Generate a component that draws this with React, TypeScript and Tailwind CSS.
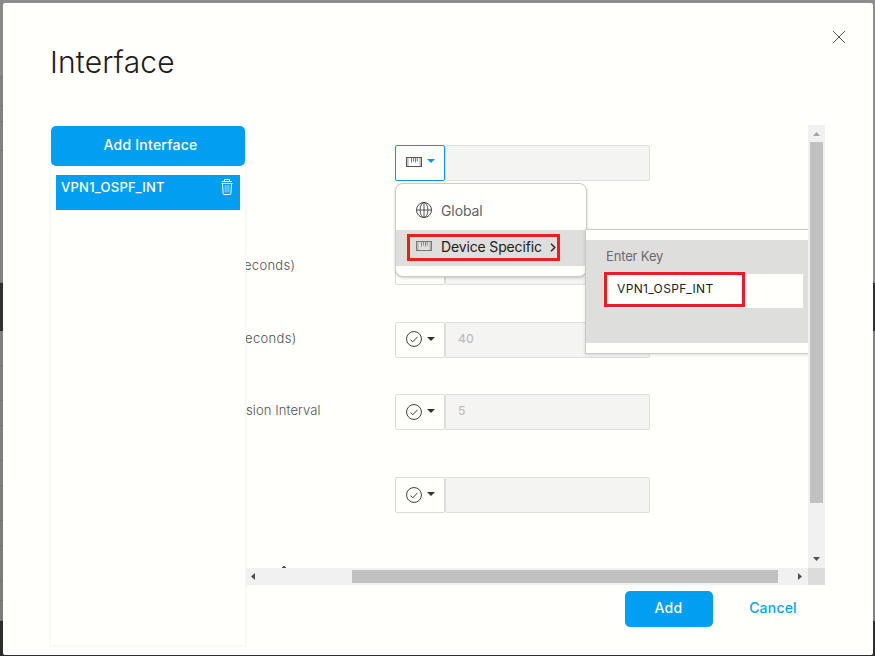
import React from "react";

const bands = [
  { h: "h-[77px]", c: "bg-[#898989]" },
  { h: "h-[29px]", c: "bg-[#838383]" },
  { h: "h-4", c: "bg-[#828282]" },
  { h: "h-[29px]", c: "bg-[#828282]" },
  { h: "h-[132px]", c: "bg-[#828282]" },
  { h: "h-12", c: "bg-[#303032]" },
  { h: "h-[35px]", c: "bg-[#80807e]" },
  { h: "h-[35px]", c: "bg-[#80807e]" },
  { h: "h-[25px]", c: "bg-[#80807e]" },
  { h: "h-[35px]", c: "bg-[#80807e]" },
  { h: "h-[25px]", c: "bg-[#80807e]" },
  { h: "h-[35px]", c: "bg-[#7c7c78]" },
  { h: "h-[25px]", c: "bg-[#7c7c78]" },
  { h: "h-[35px]", c: "bg-[#7c7c78]" },
  { h: "h-5", c: "bg-[#7c7c78]" },
  { h: "h-5", c: "bg-[#7c7c7c]" },
  { h: "h-[35px]", c: "bg-[#2d2d30]" },
];

function Backdrop() {
  return (
    <div className="absolute inset-0 flex bg-[#828280]">
      <div className="flex w-[3px] flex-col">
        {bands.map((b, i) => (
          <div key={i} className={`${b.h} ${b.c} shrink-0 border-b border-black/10`} />
        ))}
      </div>
      <div className="flex flex-1 flex-col">
        <div className="h-[283px] bg-[#8d8d8b]" />
        <div className="h-12 bg-[#303032]" />
        <div className="h-[290px] bg-[#80807e]" />
        <div className="h-[35px] bg-[#2d2d30]" />
      </div>
    </div>
  );
}

function DeviceIcon({ className = "" }: { className?: string }) {
  return (
    <svg width="16" height="10" viewBox="0 0 16 10" fill="none" stroke="currentColor" className={className}>
      <rect x="0.5" y="0.5" width="15" height="9" strokeWidth="1" />
      <path d="M1.9 1v8M14.1 1v8" strokeWidth="0.6" />
      <path d="M5.5 1v4.5M7.5 1v3.5M9.5 1v4.5M11.2 1v3.5" strokeWidth="0.8" />
    </svg>
  );
}

function GlobeIcon() {
  return (
    <svg width="16" height="16" viewBox="0 0 16 16" fill="none" stroke="#444" strokeWidth="1">
      <circle cx="8" cy="8" r="7.5" />
      <ellipse cx="8" cy="8" rx="3.9" ry="7.5" strokeWidth="0.9" />
      <path d="M8 .5v15M.5 8h15" strokeWidth="0.9" />
    </svg>
  );
}

function CheckIcon() {
  return (
    <svg width="16" height="16" viewBox="0 0 16 16" fill="none" stroke="#3f3f3f">
      <circle cx="8" cy="8" r="7.45" strokeWidth="1" />
      <path d="M4.5 8.6 6.8 10.8 11.5 5.8" strokeWidth="1" />
    </svg>
  );
}

function Caret({ className }: { className: string }) {
  return (
    <svg width="8" height="4" viewBox="0 0 8 4" fill="currentColor" className={className}>
      <path d="M0 0h8L4 4z" />
    </svg>
  );
}

function TrashIcon() {
  return (
    <svg width="12" height="17" viewBox="0 0 12 17" fill="none" stroke="#fff" strokeWidth="1">
      <path d="M1 3.5h10M3.5 3.2V1.5h5v1.7M.5 5.5h11M1.5 5.5l.6 10q.1 1 1 1h5.8q.9 0 1-1l.6-10" />
      <path d="M4.2 7v7.5M6 7v7.5M7.8 7v7.5" strokeWidth="0.6" />
    </svg>
  );
}

type FieldProps = { label?: string; labelClass?: string; value?: string; gap: string; iconClass?: string; active?: boolean };

function Field({ label, labelClass = "", value, gap, iconClass = "mt-[9px]", active }: FieldProps) {
  return (
    <div className={`${gap} flex h-9 w-[404px] shrink-0`}>
      <div className={`w-[149px] whitespace-nowrap text-[13px] leading-8 font-light text-[#505050] ${labelClass}`}>{label}</div>
      <div
        className={`flex w-[50px] items-start rounded-[2px] border pl-[10px] ${
          active ? "border-[#0d94f5] text-[#0096f0]" : "border-[#dadad8] text-[#333]"
        }`}
      >
        {active ? <DeviceIcon className="mt-[11px] text-[#555]" /> : <div className={iconClass}><CheckIcon /></div>}
        <Caret className={active ? "mt-[13px] ml-[5px]" : "mt-[14px] ml-[5px]"} />
      </div>
      <div className="flex-1 rounded-[2px] border border-[#dededb] bg-[#f4f5f2] pl-3 text-[12px] leading-[31px] font-medium text-[#bdbdbd]">
        {value}
      </div>
    </div>
  );
}

function DropdownMenu() {
  return (
    <div className="absolute top-[58px] left-[149px] h-[94px] w-[192px] rounded-lg border border-[#cbcbc9] bg-[#fffffc] pt-[9px] shadow-[0_1px_3px_rgba(0,0,0,0.2)]">
      <div className="flex h-[37px] items-start pt-[9px] pl-5 text-[14px] leading-[18px] text-[#626262]">
        <GlobeIcon />
        <span className="ml-[9px] tracking-[-0.1px]">Global</span>
      </div>
      <div className="flex h-9 items-center bg-[#dededd] pl-[11px]">
        <div className="-mt-[1px] flex h-[27px] w-[153px] items-center border-[3px] border-[#ed1c24] pl-[6px] text-[14px] whitespace-nowrap text-[#202020]">
          <DeviceIcon className="-mt-[3px] shrink-0 text-[#777]" />
          <span className="-mt-[2px] ml-[9px] w-[101px] shrink-0 tracking-[-0.15px]">Device Specific</span>
          <svg width="6" height="9" viewBox="0 0 6 9" fill="none" stroke="#222" strokeWidth="1.4" className="ml-[8px] shrink-0">
            <path d="M1 .7 4.8 4.5 1 8.3" />
          </svg>
        </div>
      </div>
    </div>
  );
}

function KeyPanel() {
  return (
    <div className="absolute top-[104px] left-[339px] h-[125px] w-[240px] border border-[#c9c9c7] bg-[#fffffc] pt-[10px] shadow-[0_1px_4px_rgba(0,0,0,0.12)]">
      <div className="h-[103px] bg-[#dededd] pl-5">
        <div className="h-[34px] text-[13px] leading-[32px] tracking-[-0.15px] text-[#6a6a6a]">Enter Key</div>
        <div className="relative ml-px h-[34px] w-[196px] bg-[#fffffc] pl-[10px] text-[12px] leading-[29px] tracking-[0.35px] text-[#222]">
          VPN1_OSPF_INT
          <div className="absolute -top-[2px] -left-[3px] h-[35px] w-[141px] border-[3px] border-[#ed1c24]" />
        </div>
      </div>
    </div>
  );
}

function ScrollRegion() {
  return (
    <div className="grid h-[460px] w-[579px] grid-cols-[562px_17px] grid-rows-[443px_17px]">
      <div className="relative flex flex-col overflow-hidden">
        <Field gap="mt-5" active />
        <Field gap="mt-[68px]" label="econds)" labelClass="-ml-[2px] w-[151px] tracking-[0.3px]" />
        <Field gap="mt-[37px]" label="econds)" labelClass="-ml-[1px] w-[150px] tracking-[0.35px]" value="40" iconClass="mt-[8px]" />
        <Field gap="mt-9" label="sion Interval" labelClass="tracking-[0.1px]" value="5" />
        <Field gap="mt-[47px]" />
        <svg width="4" height="2" viewBox="0 0 4 2" fill="#555" className="mt-[53px] ml-[36px] shrink-0">
          <path d="M1 0h2v1h1v1H0V1h1z" />
        </svg>
        <DropdownMenu />
        <KeyPanel />
      </div>
      <div className="flex flex-col items-center bg-[#f1f1f1]">
        <svg width="7" height="4" viewBox="0 0 7 4" fill="#a3a3a3" className="mt-[7px]"><path d="M3.5 0 7 4H0z" /></svg>
        <div className="mt-[6px] h-[361px] w-[13px] bg-[#c1c1c1]" />
        <svg width="7" height="4" viewBox="0 0 7 4" fill="#505050" className="mt-[54px]"><path d="M0 0h7L3.5 4z" /></svg>
      </div>
      <div className="flex items-center bg-[#f1f1f1]">
        <svg width="4" height="7" viewBox="0 0 4 7" fill="#505050" className="ml-[5px]"><path d="M4 0v7L0 3.5z" /></svg>
        <div className="ml-[97px] h-[13px] w-[426px] bg-[#c1c1c1]" />
        <svg width="4" height="7" viewBox="0 0 4 7" fill="#505050" className="ml-5"><path d="M0 0v7l4-3.5z" /></svg>
      </div>
      <div className="bg-[#dcdcdc]" />
    </div>
  );
}

export default function App() {
  return (
    <div className="relative h-[656px] w-[875px] overflow-hidden pt-[3px] pl-[3px] font-['Inter','Liberation_Sans',sans-serif]">
      <Backdrop />
      <div className="relative flex h-[652px] w-[870px] flex-col rounded-[2px] bg-[#fffffc]">
        <header className="flex h-[122px] shrink-0 items-start justify-between pr-[28px] pl-12">
          <h1 className="-ml-px mt-[39px] text-[30px] leading-10 font-light tracking-[0.15px] text-[#1c1c1c]">Interface</h1>
          <svg width="12" height="12" viewBox="0 0 12 12" stroke="#555" strokeWidth="1" className="mt-7">
            <path d="M0 0 12 12M12 0 0 12" />
          </svg>
        </header>
        <div className="flex pl-12">
          <aside className="mt-px h-[519px] w-[194px] shrink-0 shadow-[0_0_4px_rgba(0,0,0,0.09)]">
            <button className="flex h-10 w-full items-start justify-center rounded-[5px] bg-[#029ff0] pt-[9px] pl-[5px] text-[14px] leading-5 font-medium tracking-[0.25px] text-white">
              Add Interface
            </button>
            <div className="mx-[5px] mt-[9px] flex h-[35px] items-start justify-between bg-[#029ff0] pr-[7px] pl-[5px] text-white">
              <span className="pt-[2px] text-[13px] leading-5 font-medium tracking-[0.25px]">VPN1_OSPF_INT</span>
              <div className="mt-[3px]"><TrashIcon /></div>
            </div>
          </aside>
          <main className="ml-px flex w-[579px] flex-col">
            <ScrollRegion />
            <footer className="mt-[6px] flex justify-end pr-7">
              <button className="h-9 w-[88px] rounded-[5px] bg-[#029ff0] pr-px pb-[3px] text-[14px] font-medium tracking-[0.3px] text-white">Add</button>
              <button className="ml-9 h-9 w-12 pb-[3px] text-[14px] font-medium tracking-[0.2px] text-[#08a5e8]">Cancel</button>
            </footer>
          </main>
        </div>
      </div>
    </div>
  );
}
